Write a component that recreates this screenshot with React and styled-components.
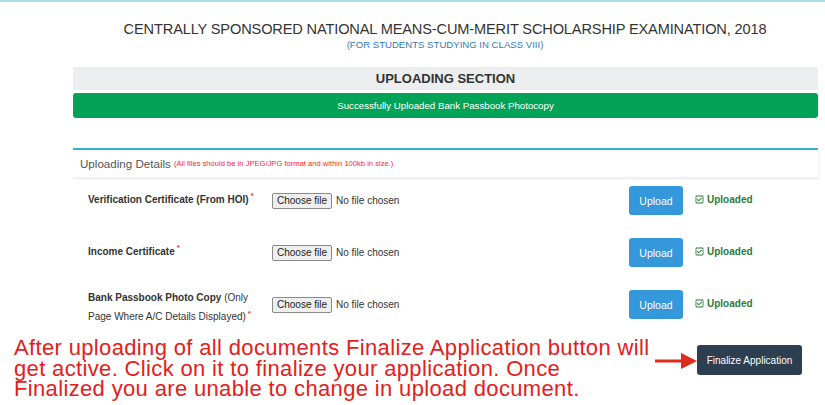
import React from 'react';
import styled, {createGlobalStyle} from 'styled-components';
import {FaRegCheckSquare} from 'react-icons/fa';

const GlobalStyle = createGlobalStyle`
    body{
        margin: 0;
        background: #fff;
        font-family: "Liberation Sans", Arial, sans-serif;
    }
`;

const Page = styled.div`
    width: 825px;
    height: 405px;
    overflow: hidden;
    border-top: 2px solid #a6dde3;
    box-sizing: border-box;
`;

const Header = styled.header`
    text-align: center;
    padding: 19px 0 0 65px;

    h1{
        margin: 0;
        font-size: 14.6px;
        font-weight: normal;
        color: #333;
        letter-spacing: -0.15px;
    }
    p{
        margin: 2px 0 0;
        font-size: 9.6px;
        color: #337ab7;
    }
`;

const Container = styled.div`
    margin: 17px 7px 0 73px;
`;

const SectionTitle = styled.h2`
    margin: 0;
    height: 23px;
    line-height: 23px;
    background: #eceeef;
    text-align: center;
    font-size: 13px;
    color: #333;
`;

const Alert = styled.div`
    margin-top: 3px;
    height: 25px;
    line-height: 25px;
    background: #03a357;
    border-radius: 3px;
    color: #fff;
    font-size: 9.7px;
    text-align: center;
`;

const Panel = styled.section`
    margin-top: 30px;
    border-top: 2px solid #33b5d4;
`;

const PanelHeading = styled.div`
    height: 27px;
    display: flex;
    align-items: center;
    padding-left: 7px;
    border-bottom: 2px solid #f0f0f0;
    box-shadow: 1px 0 2px rgba(0,0,0,0.08);
    color: #555;
    font-size: 11.6px;

    small{
        margin-left: 3px;
        font-size: 7.6px;
        color: #ff1f1f;
    }
`;

const Rows = styled.div`
    padding: 7px 0 0 15px;
    display: flex;
    flex-direction: column;
    gap: 23px;
`;

const Row = styled.div`
    display: grid;
    grid-template-columns: 184px 357px 66px auto;
    grid-template-rows: 29px;
    align-items: center;
    height: 29px;
`;

const Label = styled.label`
    font-size: 10px;
    font-weight: bold;
    color: #333;
    line-height: 19px;
    align-self: ${props => props.$top ? 'start' : 'center'};
    margin-top: ${props => props.$top ? '-2px' : '-3px'};

    span{
        font-weight: normal;
    }
    sup{
        color: #e33;
        font-size: 8px;
        line-height: 0;
        margin-left: 2px;
    }
`;

const FileField = styled.div`
    display: flex;
    align-items: center;
    gap: 4px;
    font-size: 10px;
    color: #333;
`;

const ChooseButton = styled.button`
    font-family: inherit;
    font-size: 10px;
    color: #222;
    background: #efefef;
    border: 1px solid #8a8a8a;
    border-radius: 2px;
    padding: 1px 4px;
    height: 16px;
    line-height: 12px;
`;

const UploadButton = styled.button`
    width: 54px;
    height: 29px;
    border: none;
    border-radius: 3px;
    background: #3498db;
    color: #fff;
    font-family: inherit;
    font-size: 10.5px;
`;

const Status = styled.div`
    display: flex;
    align-items: center;
    gap: 3px;
    margin-top: -3px;
    color: #2b7a3b;
    font-weight: bold;
    font-size: 10px;

    svg{
        width: 9px;
        height: 9px;
    }
`;

const Footer = styled.div`
    display: flex;
    align-items: flex-start;
    margin-top: 19px;
    padding-left: 14px;
`;

const Notice = styled.p`
    margin: 0;
    width: 641px;
    font-size: 22px;
    line-height: 20.5px;
    color: #e3201b;
    letter-spacing: 0.35px;
    white-space: nowrap;
`;

const FinalizeButton = styled.button`
    width: 105px;
    height: 30px;
    padding: 0;
    margin-top: 7px;
    border: none;
    border-radius: 3px;
    background: #2c3e50;
    color: #fff;
    font-family: inherit;
    font-size: 10px;
    white-space: nowrap;
`;

const ArrowMark = styled.svg`
    margin-top: 15px;
    flex-shrink: 0;
`;

const Arrow = () => (
    <ArrowMark width="42" height="16" viewBox="0 0 42 16">
        <rect x="0" y="6.5" width="28" height="3" fill="#e02a1d"/>
        <polygon points="26,0 42,8 26,16" fill="#e02a1d"/>
    </ArrowMark>
);

const documents = [
    {label: 'Verification Certificate (From HOI)'},
    {label: 'Income Certificate'},
    {label: 'Bank Passbook Photo Copy', note: ['(Only', 'Page Where A/C Details Displayed)'], top: true},
];

const App = () => {
    return(
        <Page>
            <GlobalStyle/>
            <Header>
                <h1>CENTRALLY SPONSORED NATIONAL MEANS-CUM-MERIT SCHOLARSHIP EXAMINATION, 2018</h1>
                <p>(FOR STUDENTS STUDYING IN CLASS VIII)</p>
            </Header>
            <Container>
                <SectionTitle>UPLOADING SECTION</SectionTitle>
                <Alert>Successfully Uploaded Bank Passbook Photocopy</Alert>
                <Panel>
                    <PanelHeading>
                        Uploading Details<small>(All files should be in JPEG/JPG format and within 100kb in size.)</small>
                    </PanelHeading>
                    <Rows>
                        {documents.map(d => (
                            <Row key={d.label}>
                                <Label $top={d.top}>
                                    {d.label}
                                    {d.note && <><span> {d.note[0]}</span><br/><span>{d.note[1]}</span></>}
                                    <sup>*</sup>
                                </Label>
                                <FileField>
                                    <ChooseButton>Choose file</ChooseButton>No file chosen
                                </FileField>
                                <UploadButton>Upload</UploadButton>
                                <Status><FaRegCheckSquare/>Uploaded</Status>
                            </Row>
                        ))}
                    </Rows>
                </Panel>
            </Container>
            <Footer>
                <Notice>
                    After uploading of all documents Finalize Application button will<br/>
                    get active. Click on it to finalize your application. Once<br/>
                    Finalized you are unable to change in upload document.
                </Notice>
                <Arrow/>
                <FinalizeButton>Finalize Application</FinalizeButton>
            </Footer>
        </Page>
    )
};

export default App;
